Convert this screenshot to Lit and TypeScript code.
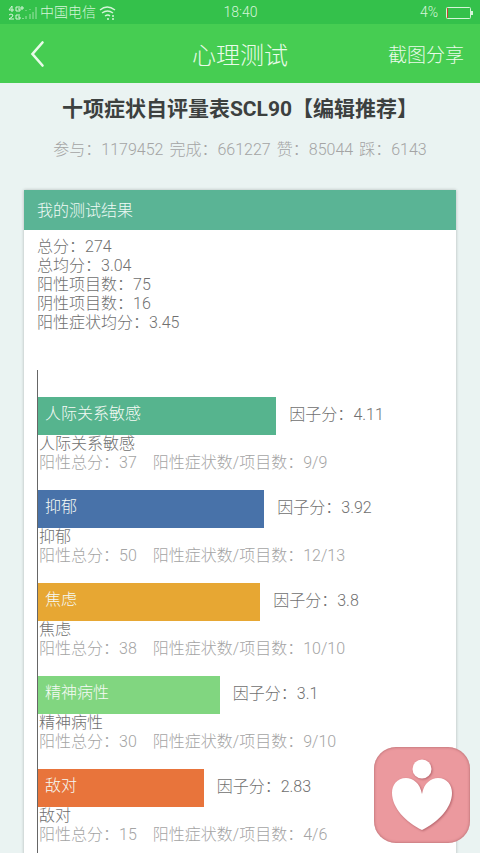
import { LitElement, html, css } from "lit";
import { customElement } from "lit/decorators.js";
import { styleMap } from "lit/directives/style-map.js";

interface Factor {
  name: string;
  score: string;
  total: number;
  items: string;
  color: string;
  width: number;
}

const factors: Factor[] = [
  { name: "人际关系敏感", score: "4.11", total: 37, items: "9/9", color: "#56b48e", width: 59 },
  { name: "抑郁", score: "3.92", total: 50, items: "12/13", color: "#4872a9", width: 56 },
  { name: "焦虑", score: "3.8", total: 38, items: "10/10", color: "#e7a733", width: 55 },
  { name: "精神病性", score: "3.1", total: 30, items: "9/10", color: "#81d680", width: 45 },
  { name: "敌对", score: "2.83", total: 15, items: "4/6", color: "#e8743b", width: 41 },
];

const stats = ["参与：1179452", "完成：661227", "赞：85044", "踩：6143"];

const summary = [
  "总分：274",
  "总均分：3.04",
  "阳性项目数：75",
  "阴性项目数：16",
  "阳性症状均分：3.45",
];

@customElement("app-root")
export class AppRoot extends LitElement {
  static styles = css`
    :host {
      display: flex;
      flex-direction: column;
      height: 100vh;
      overflow: hidden;
      background: #eaf3f2;
      color: #707070;
      font-family: Roboto, "Noto Sans CJK SC", sans-serif;
      font-size: 16px;
      font-weight: 300;
      line-height: 19px;
    }
    * {
      box-sizing: border-box;
    }
    button {
      border: 0;
      padding: 0;
      background: none;
      color: inherit;
      font: inherit;
      cursor: pointer;
    }
    svg {
      display: block;
    }
    .status {
      flex: none;
      display: grid;
      grid-template-columns: 1fr auto 1fr;
      align-items: center;
      height: 24px;
      padding: 1px 7px 0 8px;
      background: #34c14b;
      color: #d5f5d9;
      font-size: 14px;
    }
    .left,
    .right {
      display: flex;
      align-items: center;
    }
    .left {
      gap: 2px;
    }
    .right {
      justify-content: flex-end;
      gap: 8px;
    }
    .bar {
      flex: none;
      display: grid;
      grid-template-columns: 1fr auto 1fr;
      align-items: center;
      height: 59px;
      padding: 0 16px 0 28px;
      background: #46cd52;
      color: #e9fbe9;
    }
    .back {
      justify-self: start;
    }
    .bar h1 {
      margin: 0;
      padding: 4px 12px 0 0;
      font-size: 24px;
      line-height: 32px;
      font-weight: 300;
    }
    .share {
      justify-self: end;
      padding-top: 4px;
      font-size: 19px;
      line-height: 24px;
    }
    .intro {
      flex: none;
      padding: 14px 16px 30px;
      text-align: center;
    }
    .intro h2 {
      margin: 0 0 18px;
      color: #3c403f;
      font-size: 21px;
      line-height: 24px;
      font-weight: 700;
    }
    .intro p {
      display: flex;
      justify-content: center;
      gap: 6px;
      margin: 0;
      color: #a4a4a4;
      line-height: 21px;
    }
    .card {
      flex: 1 0 auto;
      display: flex;
      flex-direction: column;
      margin: 0 24px;
      background: #fff;
      box-shadow: 0 0 3px rgba(0, 0, 0, 0.25);
    }
    .card h3 {
      margin: 0;
      padding: 2px 13px 0;
      background: #5ab495;
      color: #f0faf6;
      font-size: 16px;
      line-height: 38px;
      font-weight: 300;
    }
    .summary {
      margin: 0;
      padding: 7px 13px 38px;
      list-style: none;
    }
    .chart {
      flex: 1 0 auto;
      margin: 0 14px 0 13px;
      padding-top: 27px;
      border-left: 1px solid #666;
    }
    .factor {
      margin-bottom: 18px;
    }
    .track {
      display: flex;
      align-items: center;
      gap: 13px;
      height: 38px;
    }
    .fill {
      flex: none;
      height: 38px;
      padding-left: 7px;
      color: #f5faf5;
      line-height: 34px;
    }
    .score {
      padding-bottom: 4px;
    }
    .name,
    .detail {
      margin: 0;
      padding-left: 1px;
    }
    .name {
      line-height: 18px;
    }
    .detail {
      display: flex;
      gap: 16px;
      color: #a4a4a4;
    }
    .like {
      position: fixed;
      right: 10px;
      bottom: 10px;
      width: 96px;
      height: 96px;
      border-radius: 22px;
      background: #eb999e;
      box-shadow: inset 0 0 3px #a86065;
    }
    .like svg {
      filter: drop-shadow(1px 1px 1px rgba(130, 50, 60, 0.5));
    }
  `;

  render() {
    return html`
      <div class="status">
        <div class="left">
          <svg width="30" height="16" viewBox="0 0 30 16" fill="none" stroke="#d5f5d9" aria-hidden="true">
            <path d="M4 1 1 5h5M4 1v6M12 2H8v4h4V4h-2M14 1v4M16 3h-4M1 10q2-2 4 0 0 2-4 4h5M12 10H8v4h4v-2h-2M15 13v1" />
            <path d="M18 11v3M18 5v1M22 9v5M22 4v1M25 7v7M28 2v12" stroke-opacity=".65" />
          </svg>
          <span>中国电信</span>
          <svg width="20" height="16" viewBox="0 0 20 16" fill="none" stroke="#d5f5d9" stroke-width="1.4" aria-hidden="true">
            <path d="M2 5q7-6 15 0M4 8q5.500-4 11 0M7 11q3-2 5 0" />
            <path d="M9 14h2M14 11h2M14 14h2" />
          </svg>
        </div>
        <span>18:40</span>
        <div class="right">
          <span>4%</span>
          <svg width="27" height="12" viewBox="0 0 27 12" aria-hidden="true">
            <rect x=".5" y=".5" width="24" height="11" rx="1" fill="none" stroke="#d5f5d9" />
            <path d="M25 4h2v4h-2z" fill="#d5f5d9" />
            <path d="M1 1h1v10H1z" fill="#c9442e" />
          </svg>
        </div>
      </div>
      <header class="bar">
        <button class="back" aria-label="返回">
          <svg width="20" height="28" viewBox="0 0 20 28" fill="none" stroke="#e9fbe9" stroke-width="2.600" stroke-linecap="round">
            <path d="M14.500 2.500 4.500 14l10 11.500" />
          </svg>
        </button>
        <h1>心理测试</h1>
        <button class="share">截图分享</button>
      </header>
      <section class="intro">
        <h2>十项症状自评量表SCL90【编辑推荐】</h2>
        <p>${stats.map((s) => html`<span>${s}</span>`)}</p>
      </section>
      <section class="card">
        <h3>我的测试结果</h3>
        <ul class="summary">
          ${summary.map((line) => html`<li>${line}</li>`)}
        </ul>
        <div class="chart">
          ${factors.map(
            (f) => html`
              <div class="factor">
                <div class="track">
                  <div class="fill" style=${styleMap({ width: `${f.width}%`, background: f.color })}>${f.name}</div>
                  <span class="score">因子分：${f.score}</span>
                </div>
                <p class="name">${f.name}</p>
                <p class="detail">
                  <span>阳性总分：${f.total}</span><span>阳性症状数/项目数：${f.items}</span>
                </p>
              </div>
            `
          )}
        </div>
      </section>
      <button class="like" aria-label="关爱">
        <svg width="96" height="96" viewBox="0 0 96 96" fill="#fff">
          <circle cx="48" cy="22" r="9.500" />
          <path d="M48 47C46 36 39 31 32 31C23 31 18 38 18 46C18 61 32 75 48 83C64 75 78 61 78 46C78 38 73 31 64 31C57 31 50 36 48 47Z" />
        </svg>
      </button>
    `;
  }
}
